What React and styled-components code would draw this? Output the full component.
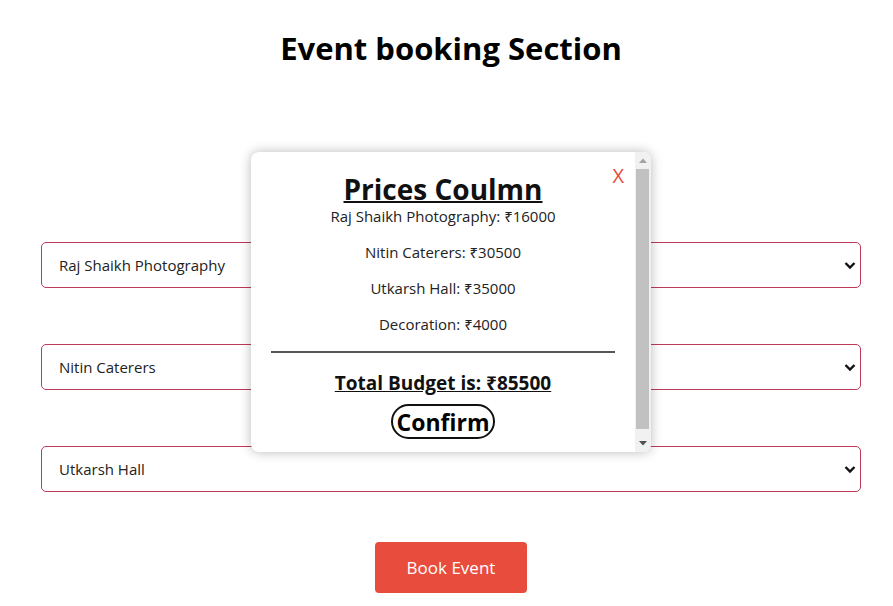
import React, { useState } from 'react'
import styled, { createGlobalStyle } from 'styled-components'

const GlobalStyle = createGlobalStyle`
  body {
    margin: 0;
    background: #ffffff;
    font-family: 'Open Sans', 'Noto Sans', sans-serif;
    color: #111111;
  }`

const Page = styled.div`
  position: relative;
  width: 820px;
  margin-left: 41px;
  padding: 29px 0 20px;`

const Title = styled.h1`
  margin: 0;
  font-size: 31px;
  line-height: 38px;
  font-weight: 700;
  text-align: center;
  color: #000;`

const Form = styled.div`
  margin-top: 175px;
  display: flex;
  flex-direction: column;
  gap: 56px;`

const SelectWrap = styled.div`
  position: relative;`

const Select = styled.select`
  appearance: none;
  width: 100%;
  height: 46px;
  padding: 0 40px 0 17px;
  border: 1px solid #bd3a58;
  border-radius: 5px;
  background: #fff;
  font-family: inherit;
  font-size: 15px;
  color: #222;
  outline: none;`

const Chevron = styled.svg`
  position: absolute;
  right: 4px;
  top: 19px;
  pointer-events: none;`

const Actions = styled.div`
  display: flex;
  justify-content: center;
  margin-top: 50px;`

const BookButton = styled.button`
  width: 152px;
  height: 51px;
  border: none;
  border-radius: 4px;
  background: #e74c3c;
  color: #fff;
  font-family: inherit;
  font-size: 17px;
  cursor: pointer;`

const Modal = styled.div`
  position: absolute;
  top: 152px;
  left: 50%;
  transform: translateX(-50%);
  width: 400px;
  height: 300px;
  display: flex;
  background: #fff;
  border-radius: 8px;
  box-shadow: 0 0 12px rgba(0, 0, 0, 0.28);
  overflow: hidden;`

const ModalBody = styled.div`
  flex: 1;
  overflow: hidden;
  padding: 20px 20px 0;
  text-align: center;`

const ScrollTrack = styled.div`
  width: 16px;
  display: flex;
  flex-direction: column;
  background: #f1f1f1;`

const ScrollArrow = styled.div`
  height: 17px;
  display: flex;
  align-items: center;
  justify-content: center;`

const ScrollThumb = styled.div`
  height: 260px;
  margin: 0 2px 0 1px;
  background: #c1c1c1;`

const ScrollRest = styled.div`
  flex: 1;`

const Close = styled.span`
  position: absolute;
  top: 10px;
  right: 27px;
  color: #e74c3c;
  font-size: 20px;
  cursor: pointer;`

const ModalTitle = styled.h2`
  margin: 0;
  font-size: 28px;
  line-height: 34px;
  font-weight: 700;
  text-decoration: underline;
  text-decoration-thickness: 2px;`

const PriceLine = styled.p`
  margin: ${p => (p.$first ? '0' : '16px')} 0 0;
  font-size: 15px;
  line-height: 20px;
  color: #222;`

const Divider = styled.hr`
  margin: 17px 0 0;
  border: none;
  height: 2px;
  background: #555;`

const Total = styled.h3`
  margin: 18px 0 0;
  font-size: 19px;
  line-height: 24px;
  font-weight: 700;
  text-decoration: underline;`

const ConfirmButton = styled.button`
  margin-top: 9px;
  padding: 0 4px;
  height: 35px;
  border: 2px solid #111;
  border-radius: 18px;
  background: #fff;
  font-family: inherit;
  font-size: 23px;
  font-weight: 700;
  color: #000;
  cursor: pointer;`

const options = ['Raj Shaikh Photography', 'Nitin Caterers', 'Utkarsh Hall']

const prices = [
  ['Raj Shaikh Photography', 16000],
  ['Nitin Caterers', 30500],
  ['Utkarsh Hall', 35000],
  ['Decoration', 4000],
]

export default function App() {
  const [open, setOpen] = useState(true)
  const total = prices.reduce((s, p) => s + p[1], 0)

  return (
    <Page>
      <GlobalStyle />
      <Title>Event booking Section</Title>

      <Form>
        {options.map(name => (
          <SelectWrap key={name}>
            <Select defaultValue={name}>
              <option>{name}</option>
            </Select>
            <Chevron width="14" height="9" viewBox="0 0 14 9">
              <path d="M2.5 2 L7 6.5 L11.5 2" fill="none" stroke="#111" strokeWidth="2.4" />
            </Chevron>
          </SelectWrap>
        ))}
      </Form>

      <Actions>
        <BookButton>Book Event</BookButton>
      </Actions>

      {open && (
        <Modal>
          <Close onClick={() => setOpen(false)}>X</Close>
          <ModalBody>
            <ModalTitle>Prices Coulmn</ModalTitle>
            {prices.map(([name, price], i) => (
              <PriceLine key={name} $first={i === 0}>
                {name}: ₹{price}
              </PriceLine>
            ))}
            <Divider />
            <Total>Total Budget is: ₹{total}</Total>
            <ConfirmButton>Confirm</ConfirmButton>
          </ModalBody>
          <ScrollTrack>
            <ScrollArrow>
              <svg width="8" height="5" viewBox="0 0 8 5">
                <polygon points="0,5 4,0.5 8,5" fill="#a3a3a3" />
              </svg>
            </ScrollArrow>
            <ScrollThumb />
            <ScrollRest />
            <ScrollArrow>
              <svg width="8" height="5" viewBox="0 0 8 5">
                <polygon points="0,0 8,0 4,4.5" fill="#505050" />
              </svg>
            </ScrollArrow>
          </ScrollTrack>
        </Modal>
      )}
    </Page>
  )
}
